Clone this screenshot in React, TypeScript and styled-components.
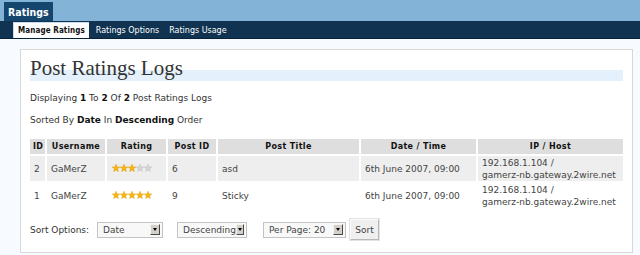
import React from 'react'
import styled, { createGlobalStyle } from 'styled-components'

const GlobalStyle = createGlobalStyle`
    html, body {
        margin: 0;
        padding: 0;
        background: #f7fbff;
    }
    body {
        font-family: "DejaVu Sans", Verdana, sans-serif;
        font-size: 9px;
        color: #333333;
    }
`

const TopBar = styled.div`
    height: 21px;
    background: #83b3d7;
    display: flex;
    align-items: flex-end;
    padding-left: 4px;
`

const SiteTab = styled.div`
    height: 19px;
    padding: 0 4px;
    background: #14466e;
    color: #ffffff;
    font-family: "DejaVu Sans Condensed", "DejaVu Sans", sans-serif;
    font-weight: bold;
    font-size: 10.5px;
    display: flex;
    align-items: center;
`

const NavBar = styled.div`
    height: 17px;
    background: #0f3350;
    border-bottom: 1px solid #06213a;
    display: flex;
    align-items: flex-end;
    padding-left: 13px;
`

const NavLink = styled.div<{ $active?: boolean }>`
    height: 16px;
    padding: 0 4px;
    margin-right: ${({ $active }) => ($active ? 2 : 1)}px;
    box-sizing: border-box;
    display: flex;
    align-items: center;
    font-size: 8px;
    font-family: ${({ $active }) =>
        $active ? '"DejaVu Sans Condensed", "DejaVu Sans", sans-serif' : '"DejaVu Sans", sans-serif'};
    letter-spacing: ${({ $active }) => ($active ? '0.1px' : '0')};
    color: ${({ $active }) => ($active ? '#111111' : '#ffffff')};
    font-weight: ${({ $active }) => ($active ? 'bold' : 'normal')};
    background: ${({ $active }) => ($active ? '#ffffff' : 'transparent')};
    border-left: 1px solid ${({ $active }) => ($active ? '#c8dced' : 'transparent')};
    border-top: 1px solid ${({ $active }) => ($active ? '#c8dced' : 'transparent')};
`

const Page = styled.div`
    padding: 10px 7px 6px 20px;
`

const Card = styled.div`
    background: #ffffff;
    border: 1px solid #d5d8d6;
    padding: 6px 9px 12px 9px;
`

const Title = styled.h2`
    margin: 0;
    font-family: "Liberation Serif", "Times New Roman", serif;
    font-weight: normal;
    font-size: 21px;
    line-height: 25px;
    color: #333333;
    background: linear-gradient(to bottom, transparent 56%, #e4f0fb 56%);
`

const Info = styled.p`
    margin: 12px 0 0 0;
    line-height: 11px;
    & + & {
        margin-top: 11px;
    }
    b {
        color: #111111;
    }
`

const Table = styled.table`
    margin-top: 11px;
    margin-left: -2px;
    width: calc(100% + 4px);
    table-layout: fixed;
    border-collapse: separate;
    border-spacing: 2px;
`

const HeadCell = styled.th`
    background: #dedede;
    color: #111111;
    font-weight: bold;
    font-size: 8px;
    text-align: center;
    height: 15px;
    padding: 0 3px;
    letter-spacing: 0.35px;
`

const Row = styled.tr<{ $alt?: boolean }>`
    td {
        background: ${({ $alt }) => ($alt ? '#eeeeee' : '#ffffff')};
    }
`

const Cell = styled.td`
    height: 24px;
    padding: 1px 3px 0 4px;
    line-height: 12px;
    vertical-align: middle;
    color: #444444;
`

const SortBar = styled.div`
    margin-top: 9px;
    display: flex;
    align-items: center;
`

const SortLabel = styled.span`
    width: 67px;
`

const Select = styled.div<{ $w: number; $gap: number }>`
    width: ${({ $w }) => $w}px;
    margin-right: ${({ $gap }) => $gap}px;
    height: 16px;
    box-sizing: border-box;
    border: 1px solid #c3c3c3;
    background: #f8f8f8;
    display: flex;
    align-items: center;
    justify-content: space-between;
    padding: 0 2px 0 5px;
    color: #444444;
`

const ArrowBox = styled.span`
    width: 10px;
    height: 11px;
    box-sizing: border-box;
    border: 1px solid;
    border-color: #f4f4f4 #4a4a4a #4a4a4a #f4f4f4;
    background: #d4d0c8;
    display: flex;
    align-items: center;
    justify-content: center;
    &::after {
        content: '';
        border-left: 2px solid transparent;
        border-right: 2px solid transparent;
        border-top: 3px solid #000000;
    }
`

const SortButton = styled.button`
    height: 21px;
    width: 29px;
    box-sizing: border-box;
    padding: 0;
    font-family: inherit;
    font-size: 9px;
    color: #444444;
    background: #efefef;
    border: 1px solid;
    border-color: #fafafa #b8b8b8 #b8b8b8 #fafafa;
    outline: 1px solid #e2e2e2;
`

const Stars = styled.span`
    display: inline-flex;
    padding-left: 1px;
`

function Star({ on }: { on: boolean }) {
    return (
        <svg width="8" height="8" viewBox="0 0 10 10">
            <polygon
                points="5,0.3 6.2,3.6 9.7,3.7 7,5.9 7.9,9.4 5,7.4 2.1,9.4 3,5.9 0.3,3.7 3.8,3.6"
                fill={on ? '#f7b70c' : '#d6d6d6'}
                stroke={on ? '#d99a00' : '#bbbbbb'}
                strokeWidth="0.6"
            />
        </svg>
    )
}

const logs = [
    { id: 2, user: 'GaMerZ', rating: 3, post: 6, title: 'asd', date: '6th June 2007, 09:00' },
    { id: 1, user: 'GaMerZ', rating: 5, post: 9, title: 'Sticky', date: '6th June 2007, 09:00' }
]

export default function App() {
    return (
        <>
            <GlobalStyle />
            <TopBar>
                <SiteTab>Ratings</SiteTab>
            </TopBar>
            <NavBar>
                <NavLink $active>Manage Ratings</NavLink>
                <NavLink>Ratings Options</NavLink>
                <NavLink>Ratings Usage</NavLink>
            </NavBar>
            <Page>
                <Card>
                    <Title>Post Ratings Logs</Title>
                    <Info>
                        Displaying <b>1</b> To <b>2</b> Of <b>2</b> Post Ratings Logs
                    </Info>
                    <Info>
                        Sorted By <b>Date</b> In <b>Descending</b> Order
                    </Info>
                    <Table>
                        <colgroup>
                            <col style={{ width: 15 }} />
                            <col style={{ width: 58 }} />
                            <col style={{ width: 59 }} />
                            <col style={{ width: 48 }} />
                            <col style={{ width: 141 }} />
                            <col style={{ width: 115 }} />
                            <col />
                        </colgroup>
                        <thead>
                            <tr>
                                <HeadCell>ID</HeadCell>
                                <HeadCell>Username</HeadCell>
                                <HeadCell>Rating</HeadCell>
                                <HeadCell>Post ID</HeadCell>
                                <HeadCell>Post Title</HeadCell>
                                <HeadCell>Date / Time</HeadCell>
                                <HeadCell>IP / Host</HeadCell>
                            </tr>
                        </thead>
                        <tbody>
                            {logs.map((l, i) => (
                                <Row key={l.id} $alt={i % 2 === 0}>
                                    <Cell>{l.id}</Cell>
                                    <Cell>{l.user}</Cell>
                                    <Cell>
                                        <Stars>
                                            {[1, 2, 3, 4, 5].map((n) => (
                                                <Star key={n} on={n <= l.rating} />
                                            ))}
                                        </Stars>
                                    </Cell>
                                    <Cell>{l.post}</Cell>
                                    <Cell>{l.title}</Cell>
                                    <Cell>{l.date}</Cell>
                                    <Cell>
                                        192.168.1.104 /<br />
                                        gamerz-nb.gateway.2wire.net
                                    </Cell>
                                </Row>
                            ))}
                        </tbody>
                    </Table>
                    <SortBar>
                        <SortLabel>Sort Options:</SortLabel>
                        <Select $w={66} $gap={14}>
                            Date <ArrowBox />
                        </Select>
                        <Select $w={70} $gap={16}>
                            Descending <ArrowBox />
                        </Select>
                        <Select $w={83} $gap={4}>
                            Per Page: 20 <ArrowBox />
                        </Select>
                        <SortButton>Sort</SortButton>
                    </SortBar>
                </Card>
            </Page>
        </>
    )
}
